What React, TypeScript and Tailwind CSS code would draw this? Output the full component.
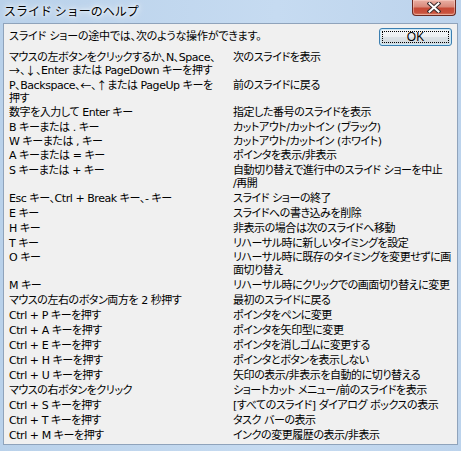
import React from "react";

type Row = { l: React.ReactNode; r: React.ReactNode; h: string };

const A = ({ c }: { c: string }) => <span className="font-['Noto_Sans_CJK_JP',sans-serif] tracking-normal leading-[13px] align-top">{c}</span>;

const rows: Row[] = [
  { l: <>マウスの左ボタンをクリックするか、N、Space、<br /><A c="→" />、<A c="↓" />、Enter または PageDown キーを押す</>, r: "次のスライドを表示", h: "h-[28px]" },
  { l: <>P、Backspace、<A c="←" />、<A c="↑" />または PageUp キーを<br />押す</>, r: "前のスライドに戻る", h: "h-[27px]" },
  { l: "数字を入力して Enter キー", r: "指定した番号のスライドを表示", h: "h-[15px]" },
  { l: "B キーまたは . キー", r: "カットアウト/カットイン (ブラック)", h: "h-[14px]" },
  { l: "W キーまたは , キー", r: "カットアウト/カットイン (ホワイト)", h: "h-[14px]" },
  { l: "A キーまたは = キー", r: "ポインタを表示/非表示", h: "h-[15px]" },
  { l: "S キーまたは + キー", r: <>自動切り替えで進行中のスライド ショーを中止<br />/再開</>, h: "h-[28px]" },
  { l: "Esc キー、Ctrl + Break キー、- キー", r: "スライド ショーの終了", h: "h-[15px]" },
  { l: "E キー", r: "スライドへの書き込みを削除", h: "h-[15px]" },
  { l: "H キー", r: "非表示の場合は次のスライドへ移動", h: "h-[15px]" },
  { l: "T キー", r: "リハーサル時に新しいタイミングを設定", h: "h-[14px]" },
  { l: "O キー", r: <>リハーサル時に既存のタイミングを変更せずに画<br />面切り替え</>, h: "h-[28px]" },
  { l: "M キー", r: "リハーサル時にクリックでの画面切り替えに変更", h: "h-[15px]" },
  { l: "マウスの左右のボタン両方を 2 秒押す", r: "最初のスライドに戻る", h: "h-[15px]" },
  { l: "Ctrl + P キーを押す", r: "ポインタをペンに変更", h: "h-[15px]" },
  { l: "Ctrl + A キーを押す", r: "ポインタを矢印型に変更", h: "h-[15px]" },
  { l: "Ctrl + E キーを押す", r: "ポインタを消しゴムに変更する", h: "h-[15px]" },
  { l: "Ctrl + H キーを押す", r: "ポインタとボタンを表示しない", h: "h-[15px]" },
  { l: "Ctrl + U キーを押す", r: "矢印の表示/非表示を自動的に切り替える", h: "h-[15px]" },
  { l: "マウスの右ボタンをクリック", r: "ショートカット メニュー/前のスライドを表示", h: "h-[15px]" },
  { l: "Ctrl + S キーを押す", r: "[すべてのスライド] ダイアログ ボックスの表示", h: "h-[15px]" },
  { l: "Ctrl + T キーを押す", r: "タスク バーの表示", h: "h-[15px]" },
  { l: "Ctrl + M キーを押す", r: "インクの変更履歴の表示/非表示", h: "h-[15px]" },
];

function CloseButton() {
  return (
    <div className="absolute left-[412px] top-0 w-[44px] h-[16px] rounded-b-[4px] border border-t-0 border-[#6b2a22] bg-[linear-gradient(#eab0a4_0%,#d98a7b_45%,#c64a36_55%,#c9523e_85%,#dc8a70_100%)] flex items-center justify-center shadow-[inset_0_0_0_1px_rgba(255,220,210,0.45)]">
      <svg width="14" height="11" viewBox="0 0 14 11">
        <path d="M2.5 1.5 L11.5 9.5 M11.5 1.5 L2.5 9.5" stroke="#3a2a2a" strokeWidth="4" strokeLinecap="square" />
        <path d="M2.5 1.5 L11.5 9.5 M11.5 1.5 L2.5 9.5" stroke="#ffffff" strokeWidth="2" strokeLinecap="square" />
      </svg>
    </div>
  );
}

export default function App() {
  return (
    <div className="w-[461px] h-[451px] flex flex-col bg-[linear-gradient(90deg,#b9d1ea,#c6dbf1_60%,#bcd3ec)] overflow-hidden">
      <div className="relative h-[23px] shrink-0">
        <div className="pl-[4px] pt-[3px] text-[12px] leading-[16px] text-black font-['Noto_Sans_CJK_JP',sans-serif] [text-shadow:0_0_6px_#fff,0_0_10px_#fff,0_0_3px_#fff]">
          スライド ショーのヘルプ
        </div>
        <CloseButton />
      </div>
      <div className="mx-[3px] mb-[6px] flex-1 border border-[#8fa3bb] bg-[#f0f0f0] font-['DejaVu_Sans','Noto_Sans_CJK_JP',sans-serif] text-[11px] leading-[13px] tracking-[-0.45px] text-black [font-feature-settings:'palt']">
        <div className="pt-[4px] pl-[5px] pr-[5px]">
          <div className="flex justify-between items-start h-[18px]">
            <div className="mt-[2px] whitespace-nowrap tracking-[-0.2px]">スライド ショーの途中では、次のような操作ができます。</div>
            <div className="w-[73px] h-[18px] rounded-[3px] border border-[#3c7fb1] p-[1px] bg-[#cbe8f6]">
              <div className="w-full h-full rounded-[2px] bg-[linear-gradient(#f4f6f7_0%,#eceff1_50%,#dde3e7_50%,#d3dade_100%)] p-[1px]">
                <div className="w-full h-full border border-dotted border-black flex items-center justify-center text-[12px] leading-[12px] tracking-normal font-['Liberation_Sans',sans-serif] [font-feature-settings:normal]">
                  OK
                </div>
              </div>
            </div>
          </div>
          <div className="mt-[5px]">
            {rows.map((row, i) => (
              <div key={i} className={`grid grid-cols-[224px_1fr] ${row.h}`}>
                <div className="whitespace-nowrap">{row.l}</div>
                <div className="whitespace-nowrap">{row.r}</div>
              </div>
            ))}
          </div>
        </div>
      </div>
    </div>
  );
}
